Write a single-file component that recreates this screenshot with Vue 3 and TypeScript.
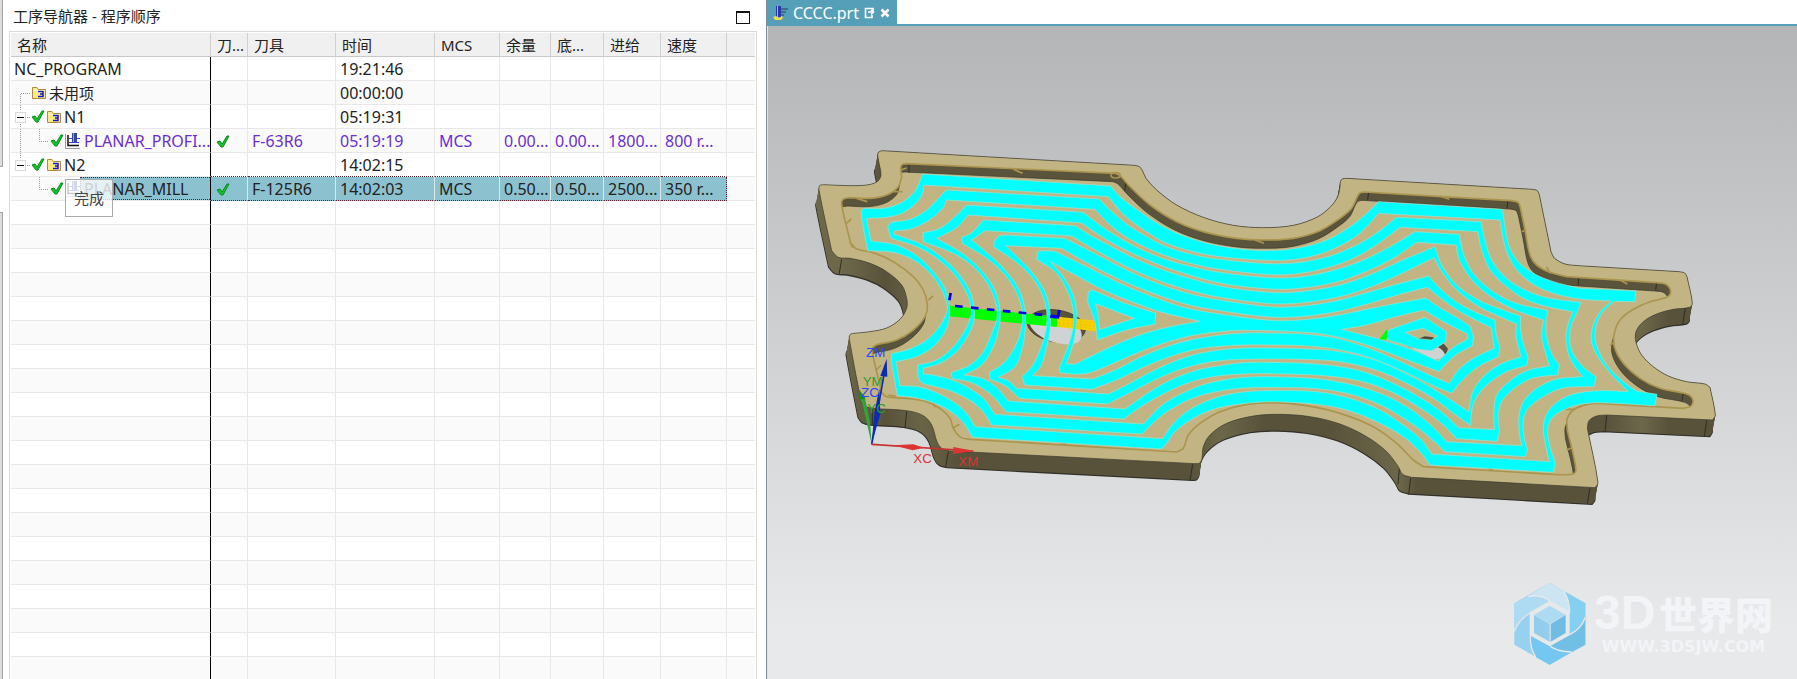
<script setup lang="ts">
type Kind = 'root' | 'unused' | 'group' | 'op' | 'empty'

interface Row {
  kind: Kind
  name: string
  time: string
  done?: boolean
  last?: boolean
  selected?: boolean
  tool?: string
  rest?: string[]
}

const columns = ['名称', '刀...', '刀具', '时间', 'MCS', '余量', '底...', '进给', '速度', '']

const named: Row[] = [
  { kind: 'root', name: 'NC_PROGRAM', time: '19:21:46' },
  { kind: 'unused', name: '未用项', time: '00:00:00' },
  { kind: 'group', name: 'N1', time: '05:19:31', done: true },
  {
    kind: 'op', name: 'PLANAR_PROFI...', time: '05:19:19', done: true,
    tool: 'F-63R6', rest: ['MCS', '0.00...', '0.00...', '1800...', '800 r...'],
  },
  { kind: 'group', name: 'N2', time: '14:02:15', done: true, last: true },
  {
    kind: 'op', name: 'PLANAR_MILL', time: '14:02:03', done: true, last: true, selected: true,
    tool: 'F-125R6', rest: ['MCS', '0.50...', '0.50...', '2500...', '350 r...'],
  },
]
const blank: Row[] = Array.from({ length: 20 }, () => ({ kind: 'empty', name: '', time: '' }))
const rows: Row[] = [...named, ...blank]
const noValues = ['', '', '', '', '']

/* Closed contour from "x,y" points; "/" after a point makes it a sharp corner,
   the runs between corners are smoothed. */
function contour(src: string): string {
  const pts = src.trim().split(/\s+/).map((t) => {
    const corner = t.endsWith('/')
    const [x, y] = t.replace('/', '').split(',').map(Number)
    return { x, y, corner }
  })
  const n = pts.length
  let d = `M${pts[0].x} ${pts[0].y}`
  for (let i = 0; i < n; i++) {
    const p1 = pts[i]
    const p2 = pts[(i + 1) % n]
    const p0 = p1.corner ? p1 : pts[(i - 1 + n) % n]
    const p3 = p2.corner ? p2 : pts[(i + 2) % n]
    const len = Math.hypot(p2.x - p1.x, p2.y - p1.y)
    const a = Math.hypot(p2.x - p0.x, p2.y - p0.y) || 1
    const b = Math.hypot(p3.x - p1.x, p3.y - p1.y) || 1
    const c1x = p1.x + ((p2.x - p0.x) / a) * len * 0.33
    const c1y = p1.y + ((p2.y - p0.y) / a) * len * 0.33
    const c2x = p2.x - ((p3.x - p1.x) / b) * len * 0.33
    const c2y = p2.y - ((p3.y - p1.y) / b) * len * 0.33
    d += `C${c1x.toFixed(1)} ${c1y.toFixed(1)} ${c2x.toFixed(1)} ${c2y.toFixed(1)} ${p2.x} ${p2.y}`
  }
  return d + 'Z'
}

const face = contour(`263,76 266,66 277,62/ 1033,106/ 1048,110 1057,121 1068,145 1100,180 1160,225 1240,262 1330,286 1420,293 1510,286 1580,262 1620,232 1643,200 1650,170 1651,155 1657,147 1670,145/
 2228,178/ 2242,182 2248,194/ 2283,365/ 2294,385 2325,402 2365,407/ 2668,425/ 2684,429 2691,440/ 2707,520 2698,532 2650,538 2600,552 2560,575 2538,605 2538,637 2555,675 2590,710 2635,738 2690,755 2745,762 2760,772/ 2776,855 2768,870/
 2450,855/ 2420,858 2397,872 2392,895/ 2424,1058 2415,1073/ 1865,1042/ 1838,1033 1825,1010 1790,965 1730,920 1650,882 1560,860 1470,853 1390,858 1310,880 1260,915 1240,950 1236,985 1229,999 1215,1001/
 480,963/ 455,955 441,935 425,885 400,857 350,842 250,835 225,828 213,812/ 178,628 180,614 190,610/ 240,605 290,594 330,568 350,535 350,505 335,465 290,425 240,400 180,385 145,382 125,362/ 87,180 89,167 100,164/ 180,167 230,165 260,156 272,140 272,122/`)

const pocket = contour(`332,115 336,104 350,101/ 975,130/ 990,137 1020,170 1080,225 1160,275 1250,308 1340,325 1420,330 1510,325 1590,302 1650,265 1685,235 1702,200 1710,189 1722,186/
 2165,212/ 2184,217 2191,232/ 2205,300 2220,375 2240,405 2280,427 2330,440/ 2600,458/ 2628,463 2642,485 2630,502 2580,515 2530,538 2490,570 2473,610 2473,650 2500,700 2550,745 2610,775 2690,792 2708,808 2703,828 2680,835/
 2430,820/ 2390,823 2350,840 2332,865 2332,900/ 2358,1020 2345,1033 2290,1033/ 1900,1010/ 1870,990 1820,940 1750,890 1650,850 1550,827 1460,818 1370,823 1290,845 1230,880 1195,915 1180,955 1160,966/
 540,928/ 512,922 490,895 480,865 450,835 410,815 350,805 290,800 275,788/ 248,672 249,652 262,643/ 320,630 370,600 405,560 412,525 400,480 370,440 310,395 250,368 200,357 182,340/ 155,225 159,208 180,203/ 240,205 290,195 325,170 335,140/`)

const rings = [
  [`398,132/ 962,168/ 990,200 1050,245 1120,290 1210,328 1310,352 1420,362 1520,355 1610,330 1680,290 1730,250 1765,215/ 2137,238/ 2145,290 2158,350 2185,395 2230,430 2290,455 2370,475/ 2537,483/ 2535,515/ 2473,514/ 2435,550 2417,595 2418,640 2450,705 2510,763 2540,783/ 2601,793/ 2595,827/ 2430,818 2370,823 2320,840 2285,865 2273,900 2280,950 2295,1000 2290,1027/ 1920,1005/ 1890,965 1840,920 1760,875 1670,840 1580,823 1450,815 1370,820 1280,835 1210,865 1155,905 1130,940 1115,957/ 548,922/ 520,878 480,843 430,818 370,802 322,797/ 303,690/ 306,670/ 350,660 400,637 440,600 465,560 472,530 455,480 420,430 370,390 310,367 233,362/ 213,245 222,235/ 280,235 330,220 370,190 387,160/`,
   `400,165/ 955,200/ 975,225 1010,262 1070,305 1130,340 1210,365 1290,380 1440,391 1530,386 1610,365 1690,325 1735,285 1765,250/ 2130,270/ 2138,320 2152,370 2180,420 2230,463 2290,490 2370,507 2465,513/ 2430,545 2408,590 2405,640 2430,690 2470,740 2515,785/ 2430,782 2350,792 2300,817 2268,855 2260,900 2268,950 2278,995/ 1925,972/ 1895,930 1840,885 1770,840 1680,805 1580,785 1440,782 1370,785 1290,799 1205,835 1150,880 1118,926/ 555,890/ 530,850 490,815 440,788 385,770 330,767/ 318,695/ 380,680 430,650 465,605 478,565 478,530 465,475 430,425 385,380 320,345 243,333/ 230,265/ 290,262 340,248 380,218 398,190`],
  [`468,180/ 928,207/ 955,235 1010,282 1070,320 1130,350 1210,374 1290,388 1440,401 1530,397 1620,378 1700,345 1765,305 1820,262/ 2073,275/ 2085,330 2105,390 2150,445 2210,482 2280,505 2373,517/ 2362,547/ 2343,590 2340,640 2355,680 2385,715 2418,740/ 2412,770/ 2320,774 2260,800 2215,835 2200,870 2202,920 2212,960/ 2207,980/ 1965,965/ 1930,932 1895,902 1840,864 1770,824 1680,792 1580,776 1440,772 1360,774 1290,783 1230,797 1180,817 1120,853 1080,888 1057,912/ 605,885/ 575,840 530,805 480,782 430,768 395,758 384,740/ 383,705/ 440,690 490,650 525,600 542,560 543,530 525,480 490,430 440,385 380,350 303,325/ 294,290 305,276/ 360,268 410,240 445,205`,
   `470,210/ 915,238/ 960,285 1010,322 1070,353 1130,378 1210,402 1290,418 1440,434 1530,430 1630,408 1710,375 1780,330 1830,292/ 2063,305/ 2075,360 2100,420 2150,470 2210,510 2280,532 2348,545/ 2330,600 2330,650 2345,695 2378,740/ 2300,747 2240,775 2200,815 2187,860 2188,910 2195,947/ 1970,935/ 1930,892 1870,843 1790,798 1690,765 1580,746 1440,740 1360,742 1290,752 1230,767 1160,798 1110,830 1060,882/ 615,853/ 580,805 530,770 480,748 430,735 400,732/ 400,715/ 450,700 500,665 535,615 552,570 552,530 538,480 505,430 460,385 400,345 312,312/ 312,303/ 370,295 425,265 458,235`],
  [`530,225/ 880,247/ 930,286 970,312 1010,336 1070,366 1130,389 1210,411 1290,427 1440,443 1530,441 1630,421 1720,390 1800,350 1875,305/ 2008,313/ 2020,370 2050,430 2110,485 2180,520 2273,541/ 2268,580 2270,620 2285,670 2308,705/ 2303,735/ 2230,744 2180,770 2138,810 2125,850 2128,905/ 2122,934/ 2000,926/ 1960,885 1900,840 1810,788 1710,753 1590,736 1440,731 1360,732 1290,737 1230,748 1170,768 1110,797 1050,832 1002,867/ 648,845/ 610,800 570,770 530,753 487,746/ 483,728/ 540,705 580,665 605,610 620,570 620,530 600,475 560,420 500,375 400,335/ 399,308/ 450,295 500,255`,
   `535,255/ 875,279/ 920,310 960,335 1040,376 1140,416 1290,459 1440,477 1530,475 1640,456 1730,424 1810,385 1880,337/ 1998,345/ 2010,395 2050,455 2110,505 2180,542 2260,570/ 2255,620 2265,665 2278,708/ 2210,722 2160,752 2120,795 2112,845 2113,899/ 2005,893/ 1960,850 1900,808 1810,760 1710,722 1590,703 1440,697 1360,698 1290,707 1230,718 1160,742 1100,772 1040,812 1005,837/ 655,813/ 620,772 580,746 523,735/ 575,705 610,650 628,590 630,540 615,480 578,425 520,372 440,325/ 500,293`],
  [`580,270/ 855,287/ 900,315 960,347 1040,388 1140,427 1290,468 1440,487 1530,485 1650,465 1750,430 1850,385 1935,350/ 1955,405 2000,465 2070,512 2140,540 2192,558/ 2192,600 2200,640 2215,682/ 2210,707/ 2150,725 2090,765 2055,810 2044,850 2042,887/ 1990,850 1930,805 1850,760 1760,721 1650,695 1540,688 1440,687 1360,688 1290,692 1230,702 1160,722 1090,752 1020,788 952,822/ 688,805/ 650,770 625,757 600,748/ 598,727/ 640,700 675,650 693,600 697,545 680,490 645,435 590,385 517,340/ 515,322/ 545,308`,
   `585,302/ 845,318/ 920,362 1010,410 1110,453 1210,484 1290,502 1440,521 1530,519 1650,500 1750,468 1840,428 1932,383/ 1955,425 2000,480 2070,532 2130,560 2180,582/ 2178,620 2193,680/ 2130,703 2080,740 2048,785 2037,845/ 1980,808 1920,770 1850,732 1760,692 1650,665 1540,656 1440,654 1360,654 1290,660 1220,672 1150,695 1080,727 1010,765 955,792/ 680,775/ 655,752 625,742/ 675,710 698,650 706,590 705,540 688,480 650,425 600,375 545,330/`],
  [`625,318/ 645,315/ 825,325/ 920,373 1010,420 1110,463 1210,494 1290,510 1440,530 1530,529 1640,512 1740,485 1830,460 1916,438/ 1950,475 2000,516 2060,548 2115,570/ 2118,610 2130,652/ 2125,680/ 2065,710 2015,753 1985,790/ 1930,767 1840,724 1740,683 1640,658 1540,647 1440,645 1360,645 1290,649 1220,658 1140,680 1060,712 980,750 905,778/ 704,765/ 696,740/ 725,710 750,660 768,600 770,545 755,490 720,435 670,390 612,352/ 612,335/`,
   `648,347/ 815,355/ 890,398 990,449 1090,490 1190,523 1290,542 1440,561 1530,560 1640,545 1740,520 1840,490 1912,472/ 1950,503 2010,545 2105,594/ 2107,620 2112,655/ 2050,685 2005,720 1978,760/ 1930,740 1850,703 1750,660 1640,625 1540,612 1440,609 1360,609 1290,615 1210,628 1130,650 1050,682 980,718 908,747/ 728,737/ 752,710 770,650 780,600 780,545 765,485 725,425 680,378`],
  [`742,365/ 760,362 795,364/ 890,410 990,460 1090,501 1190,534 1290,552 1440,571 1530,570 1630,558 1730,538 1820,520 1908,504/ 1950,533 2000,562 2040,588/ 2050,620 2047,648/ 2000,673 1965,705 1947,725/ 1860,693 1780,662 1680,630 1580,610 1440,602 1350,601 1290,605 1210,616 1130,637 1050,665 970,700 900,728 855,733/ 810,728/ 808,712/ 830,660 848,600 850,545 835,490 800,430 740,388/`,
   `782,395/ 860,437 940,480 1030,517 1110,545 1230,574/ 1150,588 1070,608 990,638 910,675 855,703/ 830,701/ 850,640 858,590 860,545 848,490 820,440`],
  [`895,485/ 908,480/ 1000,518 1097,549/ 1095,583/ 1010,600 922,630/ 916,580 893,515/`,
   `917,521/ 1033,565/ 928,599/ 926,560/`],
]
const openRight = contour('1655,598/ 1730,585 1810,562 1902,540/ 1960,575 2032,612/ 2032,628/ 1990,652 1945,693/ 1860,657 1760,625/')
const centre = contour('1795,600/ 1905,562/ 1970,605/ 1968,635/ 1925,662/ 1885,658/ 1790,628/')
const centreGap = contour('1845,607/ 1900,595/ 1942,618/ 1925,630/ 1885,626/')

const ringPaths = rings.map(([outer, inner]) =>
  contour(outer) + contour(inner))
ringPaths[5] += openRight

const sweep = Array.from({ length: 17 }, (_, i) => i * 3)
</script>

<template>
  <main class="app">
    <aside class="dock"><div class="strip short"></div><div class="strip long"></div></aside>

    <section class="navigator">
      <header class="title-bar">
        <h1>工序导航器 - 程序顺序</h1>
        <button class="maximize" type="button" aria-label="最大化"></button>
      </header>

      <div class="grid-frame">
        <table>
          <colgroup>
            <col class="c-name"><col class="c-path"><col class="c-tool"><col class="c-time"><col class="c-mcs">
            <col class="c-stock"><col class="c-floor"><col class="c-feed"><col class="c-speed"><col>
          </colgroup>
          <thead>
            <tr><th v-for="(c, i) in columns" :key="i" scope="col">{{ c }}</th></tr>
          </thead>
          <tbody>
            <tr v-for="(r, i) in rows" :key="i" :class="{ selected: r.selected, active: r.kind === 'op' && !r.selected }">
              <td class="name">
                <div class="tree" :class="r.kind">
                  <svg v-if="r.kind === 'unused'" class="guide" width="20" height="24"><path d="M9.5 24V12.5H20" /></svg>
                  <button v-if="r.kind === 'group'" class="expander" type="button" :aria-label="r.name">
                    <svg class="guide" width="20" height="24">
                      <path d="M9.5 0V6" /><path v-if="!r.last" d="M9.5 19V24" /><path d="M16 12.5H20" />
                      <rect x="4.500" y="7.500" width="10" height="10" class="box" /><path d="M6 12.500H13" class="minus" />
                    </svg>
                  </button>
                  <svg v-if="r.kind === 'op'" class="guide" width="39" height="24">
                    <path v-if="!r.last" d="M9.500 0V24" /><path d="M28.500 0V12.500H38" />
                  </svg>
                  <svg v-if="r.done" class="check" width="14" height="14" viewBox="0 0 14 14"><path d="M1 7l3-1 2 3 5-8 2 0L7 12H5z" /></svg>
                  <svg v-if="r.kind === 'unused' || r.kind === 'group'" class="folder" width="16" height="14" viewBox="0 0 16 14">
                    <path d="M1.500 12.500V1.500H6L7.500 3.500H14.500V12.500Z" fill="#ffe98a" stroke="#b08a42" />
                    <path d="M2.500 4.500H13" stroke="#fff8cf" />
                    <path d="M7 5.500H12V10.500H7M9 8H12" fill="none" stroke="#1418c8" stroke-width="1.500" />
                  </svg>
                  <svg v-if="r.kind === 'op'" class="mill" width="15" height="16" viewBox="0 0 15 16">
                    <path d="M0.500 1V15.500H15" fill="none" stroke="#999" />
                    <path d="M3 2V12.500H14" fill="none" stroke="#111" stroke-width="1.500" />
                    <path d="M4 5.500H15M4 9.500H14" stroke="#3342e0" />
                    <rect x="7" y="0" width="5" height="9" fill="#34489b" /><rect x="8" y="0" width="1" height="9" fill="#8da4ec" />
                  </svg>
                  <span class="label">{{ r.name }}</span>
                </div>
              </td>
              <td class="mark">
                <svg v-if="r.tool" class="check" width="14" height="14" viewBox="0 0 14 14"><path d="M1 7l3-1 2 3 5-8 2 0L7 12H5z" /></svg>
              </td>
              <td>{{ r.tool }}</td>
              <td>{{ r.time }}</td>
              <td v-for="(v, k) in r.rest ?? noValues" :key="k">{{ v }}</td>
              <td class="tail"></td>
            </tr>
          </tbody>
        </table>
        <div class="tooltip" role="tooltip">完成</div>
      </div>
    </section>

    <section class="viewer">
      <nav class="tabs">
        <div class="tab">
          <svg width="15" height="16" viewBox="0 0 15 16">
            <path d="M8 4H15M8 7H13M8 10H11" stroke="#38606f" stroke-width="1.500" />
            <rect x="3" y="1" width="5" height="11" fill="#2739a8" /><rect x="4" y="1" width="1" height="11" fill="#9bb0ff" />
            <path d="M0 12l3-1 3 2 3-2 1 2-2 2H2z" fill="#f0d958" />
          </svg>
          <a href="#part">CCCC.prt</a>
          <svg width="11" height="12" viewBox="0 0 11 12"><path d="M9 4V1.500H1.500V10.500H8V8M4 5H9M7 3l2.500 2L7 7.500" fill="none" stroke="#fff" stroke-width="1.600" /></svg>
          <button type="button" aria-label="关闭"><svg width="10" height="10" viewBox="0 0 10 10"><path d="M1.500 1.500L8.500 8.500M8.500 1.500L1.500 8.500" stroke="#fff" stroke-width="2.500" /></svg></button>
        </div>
      </nav>

      <div class="scene">
        <svg class="model" viewBox="-66 -312 3087 1959" preserveAspectRatio="xMinYMin meet" role="img" aria-label="CCCC.prt">
          <defs>
            <path id="face" :d="face" />
            <path id="pocket" :d="pocket" />
            <clipPath id="in-pocket"><use href="#pocket" /></clipPath>
            <clipPath id="in-hole"><ellipse cx="799" cy="588" rx="88" ry="48" transform="rotate(9 799 588)" /></clipPath>
            <linearGradient id="wall" gradientUnits="userSpaceOnUse" x1="80" y1="0" x2="2780" y2="0">
              <stop offset="0" stop-color="#6e684b" /><stop offset=".03" stop-color="#6e684b" /><stop offset=".08" stop-color="#58523b" />
              <stop offset=".12" stop-color="#6a6447" /><stop offset=".16" stop-color="#58523b" />
              <stop offset=".42" stop-color="#58523b" /><stop offset=".45" stop-color="#6d674a" /><stop offset=".5" stop-color="#58523b" />
              <stop offset=".57" stop-color="#58523b" /><stop offset=".65" stop-color="#6d674a" /><stop offset=".67" stop-color="#58523b" />
              <stop offset=".88" stop-color="#58523b" /><stop offset=".92" stop-color="#6d674a" /><stop offset=".95" stop-color="#58523b" />
            </linearGradient>
          </defs>

          <use href="#face" transform="translate(-9 50)" fill="#58523b" stroke="#33312a" stroke-width="4" />
          <g fill="url(#wall)"><use v-for="s in sweep" :key="s" href="#face" :transform="`translate(${-s * 0.18} ${s})`" /></g>
          <g class="edges"><path d="M155 388l-8 46M350 845l-5 48M475 965l-8 45M1208 1003l-8 48M1828 1015l-4 48M1862 1045l-6 48M2450 857l-5 48M2750 872l-7 48M2686 535l-8 48M2400 1075l-8 46M247 836l0 48" /></g>
          <use href="#face" fill="#c2b583" stroke="#3a372b" stroke-width="2" />

          <use href="#pocket" fill="#5a543d" />
          <g clip-path="url(#in-pocket)">
            <use href="#pocket" transform="translate(-6 25)" fill="#c2b583" stroke="#38352a" stroke-width="2" />
            <g class="edges"><path d="M357 102v26M1008 155l-4 28M1736 187l-3 22M2154 211l-3 24M2366 442l-2 24M2600 458l-3 22M2680 790l-4 22" /></g>
          </g>
          <use href="#pocket" fill="none" stroke="#ab954f" stroke-width="5" />
          <g class="ticks">
            <path d="M670 118l28 12M200 205l32 10M310 185h28M170 280l14-14M332 120l18-6M415 510l14-12M180 335l8 18M258 720l15-14M295 795l22 4M428 818l8 14M488 895l20-12M808 936l22 8M1395 330l27 10M1950 198l28 10M2195 305l14-6M2270 410l10 20M2490 450l22 12M2460 645l14-8M1465 808l30 8M2085 1012l24 8M2330 960l14-6M2325 838h30M2530 816l26 8" />
            <ellipse cx="977" cy="136" rx="14" ry="8" fill="none" />
          </g>

          <ellipse cx="799" cy="588" rx="88" ry="48" transform="rotate(9 799 588)" fill="#58523b" stroke="#2c2a22" stroke-width="2" />
          <ellipse cx="790" cy="606" rx="86" ry="48" transform="rotate(9 790 606)" fill="#d1d2d4" clip-path="url(#in-hole)" />
          <path d="M1885 626l20-7 24 3 15 11-18 4z" fill="#4e4935" />
          <path d="M1853 648l16-10 75 14 16-12 14 16-8 22-20 10z" fill="#58523b" />
          <path d="M1860 652l55 8 30-8q18 10 20 24l-16 12-24-2z" fill="#d1d2d4" />

          <path d="M480 527L802 560V591L477 559Z" fill="#0f0" />
          <path d="M802 560L920 572 918 604 802 591Z" fill="#f4d000" />
          <path class="speckle" d="M806 568L914 578M806 576L914 588M806 584L900 594" />
          <path v-for="(d, i) in ringPaths" :key="i" :d="d" class="ring" />
          <path :d="centre + centreGap" class="ring" />
          <path d="M1792 596L1768 628 1789 629 1793 612Z" fill="#0f0" />
          <path d="M495 528L800 559" class="rapid dashed" />
          <path d="M482 489L478 511M808 540L804 562L780 560" class="rapid" />

          <path d="M245 943L208 780 224 800 240 875Z" fill="#2fa43a" /><path d="M208 780V810L226 806Z" fill="#168c24" />
          <path d="M290 686L292 740 271 738ZM268 775L271 852 245 943 253 848Z" fill="#0b2cb4" /><path d="M245 943L288 700" stroke="#0b2cb4" stroke-width="5" />
          <path d="M245 943L550 963" stroke="#c83232" stroke-width="5" />
          <path d="M310 946L370 943 402 953 368 961ZM490 951L553 963 489 972Z" fill="#d33" />
          <g class="axis-text">
            <text x="228" y="681" fill="#2a45ff">ZM</text><text x="218" y="768" fill="#2d9a35">YM</text>
            <text x="213" y="801" fill="#2a45ff">ZC</text><text x="232" y="850" fill="#2d9a35">YC</text>
            <text x="370" y="1000" fill="#d33636">XC</text><text x="505" y="1008" fill="#d33636">XM</text>
          </g>
        </svg>

        <div class="watermark">
          <svg width="72" height="84" viewBox="103 71 216 248">
            <path d="M210 72L317 133V257L210 317 104 257V133Z" fill="#96d1ef" />
            <path d="M145 112L210 72 253 97Q270 125 270 160L210 126Q185 105 145 112Z" fill="#cde5f2" />
            <path d="M253 97L317 133V175Q305 210 270 227V160Q270 125 253 97Z" fill="#85cff0" />
            <path d="M317 175V257L276 279Q235 278 212 262L270 227Q305 210 317 175Z" fill="#72bfe6" />
            <path d="M276 279L210 317 168 294Q150 265 152 230L212 262Q235 278 276 279Z" fill="#74c7f0" />
            <path d="M104 217V133L145 112Q185 105 210 126L152 162Q118 180 104 217Z" fill="#aedbf2" />
            <path d="M145 112Q185 105 210 126L270 160Q270 125 253 97M270 227Q305 210 317 175M212 262Q235 278 276 279M152 230Q150 265 168 294M152 162Q118 180 104 217" fill="none" stroke="#e6e8ea" stroke-width="4" />
            <path d="M210 126L270 160V229L210 262 150 229V160Z" fill="#e6e8ea" />
            <path d="M210 140L258 167 211 194 163 167Z" fill="#addbf2" /><path d="M163 168L210 195V248L163 222Z" fill="#92cdeb" /><path d="M258 168L213 195V248L258 222Z" fill="#70bde4" />
          </svg>
          <div class="brand"><div class="big"><b>3D</b><span>世界网</span></div><div class="small">WWW.3DSJW.COM</div></div>
        </div>
      </div>
    </section>
  </main>
</template>

<style>
html, body { overflow: hidden; background: #fff; }
</style>

<style scoped>
.app { display: grid; grid-template-columns: 3px minmax(0, 763fr) minmax(0, 1031fr); height: 100vh; overflow: hidden; font: 16px/23px "Noto Sans", "Noto Sans CJK SC", sans-serif; color: #222; }
button { appearance: none; border: 0; margin: 0; padding: 0; background: none; }
.dock { display: flex; flex-direction: column; gap: 45px; height: 100%; }
.strip { box-sizing: border-box; background: #dcdcdc; border: 1px solid #a3a3a3; border-left: 0; }
.short { height: 167px; border-top: 0; }
.long { flex: 1; border-bottom: 0; }
.navigator { display: flex; flex-direction: column; height: 100vh; box-sizing: border-box; padding: 0 9px 0 6px; min-width: 0; overflow: hidden; }
.title-bar { display: flex; flex: none; align-items: center; justify-content: space-between; height: 31px; padding: 2px 7px 0 4px; box-sizing: border-box; }
h1 { margin: 0; font-size: 15px; font-weight: 400; }
.maximize { width: 14px; height: 13px; margin-top: 2px; border: 1px solid #111; border-top-width: 2px; }
.grid-frame { position: relative; flex: 1; min-height: 0; overflow: hidden; border: 1px solid #dadada; border-bottom: 0; padding: 1px 1px 0; }
table { width: 100%; table-layout: fixed; border-collapse: separate; border-spacing: 0; }
.c-name { width: 200px; } .c-path { width: 37px; } .c-tool { width: 88px; } .c-time { width: 99px; } .c-mcs { width: 65px; }
.c-stock { width: 51px; } .c-floor { width: 53px; } .c-feed { width: 57px; } .c-speed { width: 66px; }
th { box-sizing: border-box; height: 24px; padding: 2px 0 0 6px; background: #f0f0f0; border-right: 1px solid #d0d0d0; border-bottom: 1px solid #c8c8c8; font-size: 15px; font-weight: 400; line-height: 21px; text-align: left; white-space: nowrap; overflow: hidden; }
td { box-sizing: border-box; height: 24px; padding: 2px 0 0 4px; border-right: 1px solid #e8e8e8; border-bottom: 1px solid #e8e8e8; line-height: 21px; white-space: nowrap; overflow: hidden; }
th:last-child, td:last-child { border-right: 0; }
tbody tr:nth-child(even) { background: #fafafa; }
td.name { padding: 0; border-right: 1px solid #000; }
.tree { display: flex; align-items: center; height: 23px; }
.tree.root { padding-left: 3px; }
.guide { flex: none; display: block; fill: none; stroke: #999; stroke-dasharray: 1 1; }
.guide .box { stroke: #d8d8d8; fill: #fff; stroke-dasharray: none; }
.guide .minus { stroke: #111; stroke-dasharray: none; }
.expander { flex: none; height: 23px; }
.check { flex: none; display: block; fill: #12c32b; stroke: #098d1c; stroke-width: 1; }
.tree .check { margin-right: 1px; }
.folder { flex: none; margin-right: 2px; }
.mill { flex: none; }
.label { box-sizing: border-box; height: 23px; padding-top: 2px; overflow: hidden; }
.unused .label { font-size: 15px; }
.op .label { flex: 1; padding-left: 4px; }
td.mark { padding-left: 5px; }
.active { color: #6a2fd0; }
.selected td:not(.name):not(.tail) { background: #8cc1d0; border-bottom: 1px dotted #5c2030; border-right-color: #dce8ec; }
.selected td:nth-last-child(2):not(.tail) { border-right: 1px dotted #5c2030; }
.selected .op .label { padding: 1px 0 0 3px; background: #8cc1d0; border: 1px dotted #5c2030; border-right: 0; }
tr:has(+ .selected) td:not(.tail):not(.name) { border-bottom: 1px dotted #5c2030; }
.tooltip { position: absolute; left: 55px; top: 147px; box-sizing: border-box; width: 48px; height: 38px; border: 1px solid #aaa; background: rgba(255, 255, 255, .78); color: #444; font-size: 15px; line-height: 37px; text-align: center; }
.viewer { display: flex; flex-direction: column; min-width: 0; height: 100vh; border-left: 1px solid #7f8c92; }
.tabs { flex: none; height: 24px; border-bottom: 2px solid #569fb9; background: #fff; }
.tab { display: inline-flex; align-items: center; gap: 5px; box-sizing: border-box; height: 25px; padding: 1px 7px 0 6px; background: #569fb9; }
.tab a { color: #fff; text-decoration: none; }
.tab button { display: flex; }
.scene { position: relative; flex: 1; min-height: 0; background: linear-gradient(#b4b5b7, #e7e9eb 92%); border-left: 1px solid #e0e3e5; }
.model { display: block; width: 100%; height: 100%; }
.edges path { fill: none; stroke: #2f2d24; stroke-width: 3; }
.ticks { fill: none; stroke: #ab954f; stroke-width: 5; }
.ring { fill: #0ff; fill-rule: evenodd; stroke: #9fe3cf; stroke-width: 2; }
.rapid { fill: none; stroke: #0000e6; stroke-width: 8; }
.dashed { stroke-dasharray: 23 25; }
.speckle { fill: none; stroke: #ffb000; stroke-width: 3; stroke-dasharray: 5 8; }
.axis-text { font: 40px "Liberation Sans", Arial, sans-serif; }
.watermark { position: absolute; right: 24px; bottom: 13px; display: flex; align-items: center; gap: 8px; color: #f3f4f7; }
.brand { width: 179px; }
.big { display: flex; align-items: center; justify-content: space-between; height: 40px; }
.big b { font: bold 48px/40px "Liberation Sans", Arial, sans-serif; }
.big span { font: 900 38px/40px "Noto Sans CJK SC", sans-serif; }
.small { font: bold 16px/18px "DejaVu Sans", sans-serif; margin-top: 5px; text-align: center; }
</style>
